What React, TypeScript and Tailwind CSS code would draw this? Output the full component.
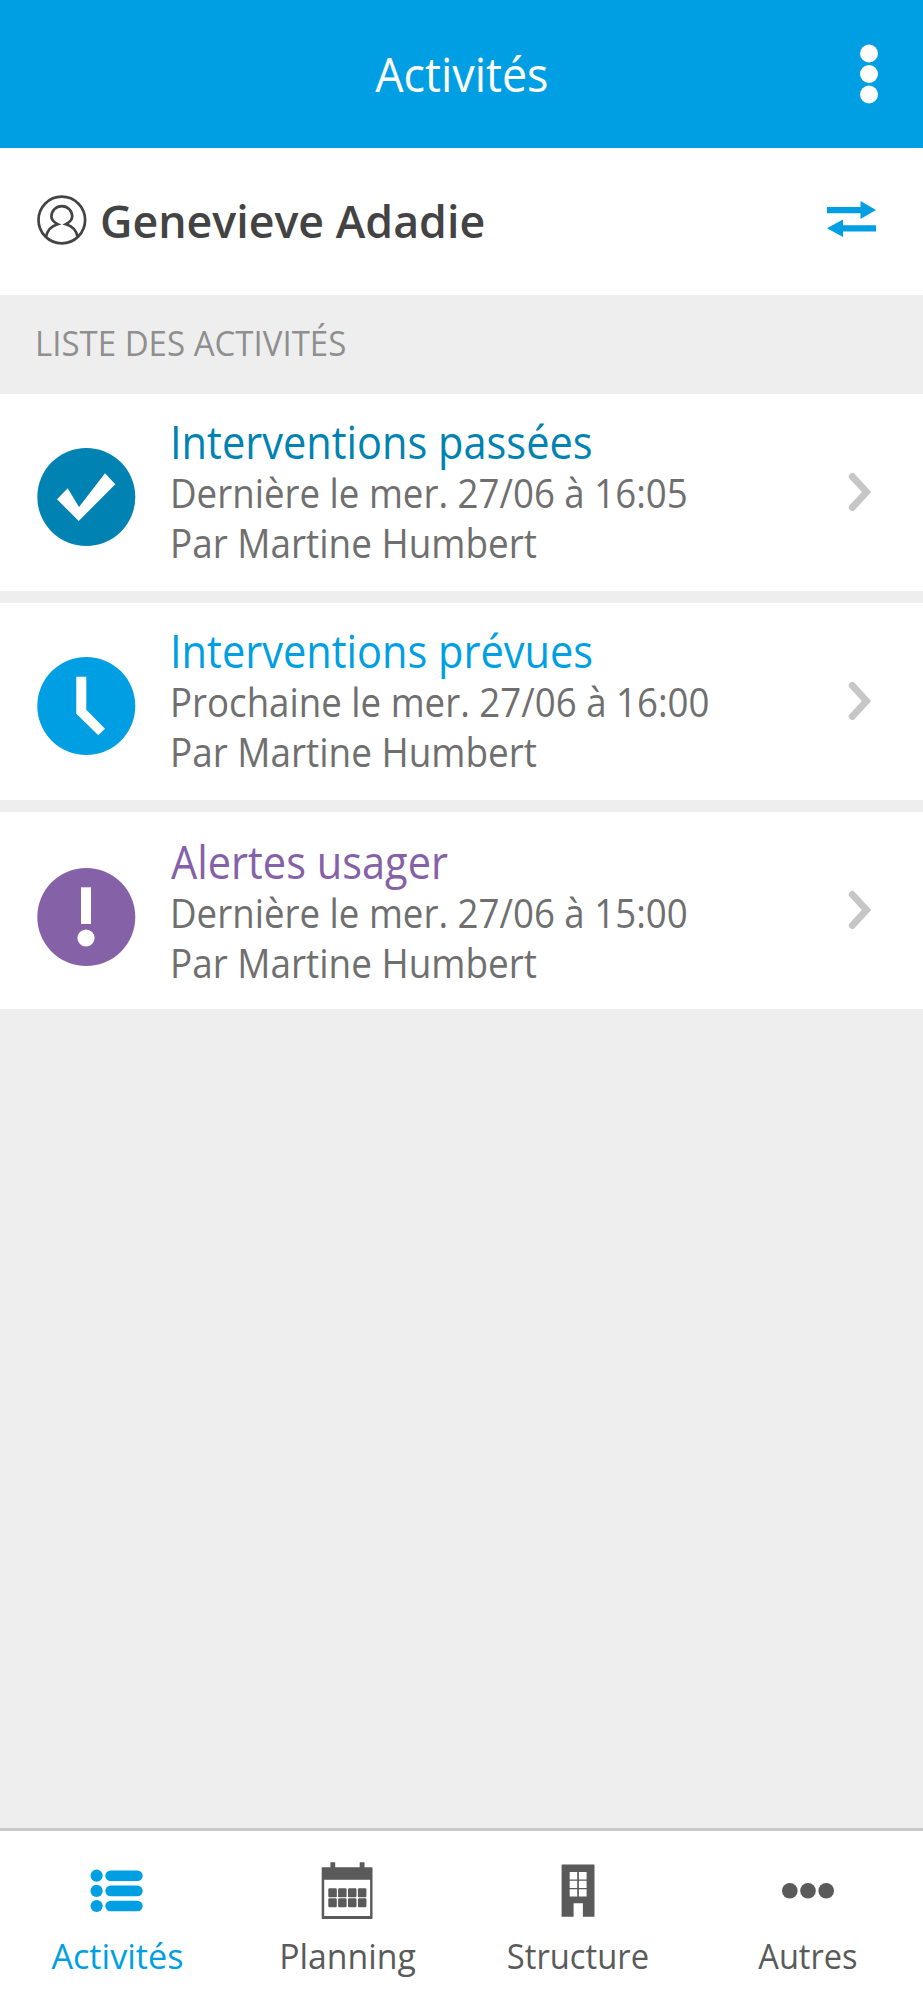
import type { ReactNode } from 'react';

type Activity = {
  title: string;
  when: string;
  by: string;
  titleClass: string;
  badgeClass: string;
  offsetClass: string;
  glyph: ReactNode;
};

type Tab = {
  label: string;
  labelClass: string;
  active?: boolean;
  icon: ReactNode;
};

const activities: Activity[] = [
  {
    title: 'Interventions passées',
    when: 'Dernière le mer. 27/06 à 16:05',
    by: 'Par Martine Humbert',
    titleClass: 'text-[#0082B2]',
    badgeClass: 'text-[#0082B2]',
    offsetClass: 'pt-[22px]',
    glyph: <path d="M20 51.3 30.7 40.3 42 59 68 25.3 78.3 36.3 41.7 73Z" fill="#fff" />,
  },
  {
    title: 'Interventions prévues',
    when: 'Prochaine le mer. 27/06 à 16:00',
    by: 'Par Martine Humbert',
    titleClass: 'text-[#009FE3]',
    badgeClass: 'text-[#009FE3]',
    offsetClass: 'pt-[22px]',
    glyph: <path d="M39.3 19.7H49.3V52.7L68 71.7 61.3 78.3 39.3 56.7Z" fill="#fff" />,
  },
  {
    title: 'Alertes usager',
    when: 'Dernière le mer. 27/06 à 15:00',
    by: 'Par Martine Humbert',
    titleClass: 'pl-px text-[#8561A7]',
    badgeClass: 'text-[#8561A7]',
    offsetClass: 'pt-6',
    glyph: (
      <>
        <rect x="44" y="19.3" width="10" height="36.7" fill="#fff" />
        <circle cx="49" cy="70" r="8.6" fill="#fff" />
      </>
    ),
  },
];

const tabs: Tab[] = [
  {
    label: 'Activités',
    labelClass: 'scale-x-[0.965]',
    active: true,
    icon: (
      <>
        {[13.7, 28.9, 44].map((y) => (
          <g key={y}>
            <circle cx="5.6" cy={y} r="6.1" />
            <rect x="14.3" y={y - 5.3} width="37.4" height="10.6" rx="5.3" />
          </g>
        ))}
      </>
    ),
  },
  {
    label: 'Planning',
    labelClass: 'scale-x-[0.955]',
    icon: (
      <>
        <path d="M9.4.3h4.8v6H9.4zM38.7.3h4.8v6h-4.8z" />
        <path
          fillRule="evenodd"
          d="M.7 6q0-.7.7-.7H50.8q.7 0 .7.7V56.3q0 .7-.7.7H1.4q-.7 0-.7-.7ZM3.2 17.7V54H49.1V17.7Z"
        />
        {[7.3, 17.1, 27, 36.9].map((x) => (
          <g key={x}>
            <rect x={x} y="26.3" width="8.5" height="9" rx="1.2" />
            <rect x={x} y="36.2" width="8.5" height="9" rx="1.2" />
          </g>
        ))}
      </>
    ),
  },
  {
    label: 'Structure',
    labelClass: 'scale-x-[0.925]',
    icon: (
      <path
        fillRule="evenodd"
        d="M9.6 3.2q0-.6.6-.6H41.9q.6 0 .6.6V54.2q0 .6-.6.6H30.9V41.2H21.6V54.8H10.2q-.6 0-.6-.6ZM17.7 10.1v7.4h7.5v-7.4ZM26.9 10.1v7.4h7.7v-7.4ZM17.7 18.7v7.3h7.5v-7.3ZM26.9 18.7v7.3h7.7v-7.3ZM17.7 27.2v7.4h7.5v-7.4ZM26.9 27.2v7.4h7.7v-7.4Z"
      />
    ),
  },
  {
    label: 'Autres',
    labelClass: 'scale-x-[0.92]',
    icon: (
      <>
        <circle cx="7.8" cy="28.7" r="7.8" />
        <circle cx="26" cy="28.7" r="7.8" />
        <circle cx="44.2" cy="28.7" r="7.8" />
      </>
    ),
  },
];

function Header() {
  return (
    <header className="flex h-[147.5px] shrink-0 items-center bg-[#009FE3] pr-[45px] pl-[63px]">
      <h1 className="flex-1 pt-0.5 text-center text-[47px] leading-none text-white">
        <span className="inline-block scale-x-[0.953]">Activités</span>
      </h1>
      <svg width="18" height="60" viewBox="0 0 18 60" fill="#fff">
        <circle cx="9" cy="9.5" r="9" />
        <circle cx="9" cy="30" r="9" />
        <circle cx="9" cy="50.5" r="9" />
      </svg>
    </header>
  );
}

function UserBar() {
  return (
    <section className="flex h-[147.5px] shrink-0 items-center bg-white pr-[46px] pb-[3px] pl-[37px] text-[#434343]">
      <svg width="50" height="50" viewBox="0 0 50 50" fill="none" stroke="currentColor" strokeWidth="2.7">
        <circle cx="24.8" cy="25" r="23.3" />
        <path d="M8.8 42.3C10 36 14 31 20.7 29.2C16.5 27 14.4 25 14.4 21.5A10.4 10.4 0 0 1 35.2 21.5C35.2 25 33 27 28.9 29.2C35.6 31 39.6 36 40.8 42.3" />
      </svg>
      <span className="ml-[13px] flex-1 text-[46px] leading-none font-semibold whitespace-nowrap">
        <span className="inline-block origin-left scale-x-[0.972]">Genevieve Adadie</span>
      </span>
      <svg width="50" height="36" viewBox="0 0 50 36" fill="#009FE3" className="mb-0.5">
        <path d="M0 6H33.5V0L49 9 33.5 18V12.2H0Z" />
        <path d="M49 30.4H16V36L0 27.3 16 18.5V24.2H49Z" />
      </svg>
    </section>
  );
}

function ActivityRow({ activity }: { activity: Activity }) {
  return (
    <li className="flex h-[197px] items-start bg-white pr-[51px] pl-[37px]">
      <div className={`flex flex-1 items-start ${activity.offsetClass}`}>
        <svg
          width="99"
          height="99"
          viewBox="0 0 99 99"
          className={`mt-8 shrink-0 ${activity.badgeClass}`}
        >
          <circle cx="49.3" cy="49" r="49" fill="currentColor" />
          {activity.glyph}
        </svg>
        <div className="ml-[34px] flex-1 whitespace-nowrap">
          <h2 className={`text-[45px] leading-[52px] ${activity.titleClass}`}>
            <span className="inline-block origin-left scale-x-[0.923]">{activity.title}</span>
          </h2>
          <p className="text-[39.5px] leading-[50px] text-[#706F6F]">
            <span className="inline-block origin-left scale-x-[0.928]">{activity.when}</span>
          </p>
          <p className="text-[39.5px] leading-[50px] text-[#706F6F]">
            <span className="inline-block origin-left scale-x-[0.934]">{activity.by}</span>
          </p>
        </div>
      </div>
      <svg
        width="24"
        height="40"
        viewBox="0 0 24 40"
        fill="none"
        stroke="#C6C6C6"
        strokeWidth="7"
        strokeLinecap="round"
        className="mt-[78px] shrink-0"
      >
        <path d="M4.3 4.5 18.5 20 4.3 35.5" />
      </svg>
    </li>
  );
}

function TabBar() {
  return (
    <nav className="grid h-[172px] shrink-0 grid-cols-4 border-t-[3px] border-[#C9C9C9] bg-white pl-0.5">
      {tabs.map((tab) => (
        <a
          key={tab.label}
          className={`flex flex-col items-center pt-[31px] ${tab.active ? 'text-[#009FE3]' : 'text-[#5A5A5A]'}`}
        >
          <svg width="52" height="58" viewBox="0 0 52 58" fill="currentColor" className="overflow-visible">
            {tab.icon}
          </svg>
          <span className={`mt-[15px] inline-block text-[35.4px] leading-[40px] ${tab.labelClass}`}>
            {tab.label}
          </span>
        </a>
      ))}
    </nav>
  );
}

export default function App() {
  return (
    <div className="flex h-[2000px] w-[923px] flex-col bg-[#EEEEEE] font-['Open_Sans','Noto_Sans',sans-serif]">
      <Header />
      <UserBar />
      <h3 className="flex h-[99px] shrink-0 items-center pb-0.5 pl-[35px] text-[34.5px] leading-none text-[#8F8F8F]">
        <span className="inline-block origin-left scale-x-[0.957]">LISTE DES ACTIVITÉS</span>
      </h3>
      <ul className="flex flex-1 flex-col gap-3">
        {activities.map((activity) => (
          <ActivityRow key={activity.title} activity={activity} />
        ))}
      </ul>
      <TabBar />
    </div>
  );
}
